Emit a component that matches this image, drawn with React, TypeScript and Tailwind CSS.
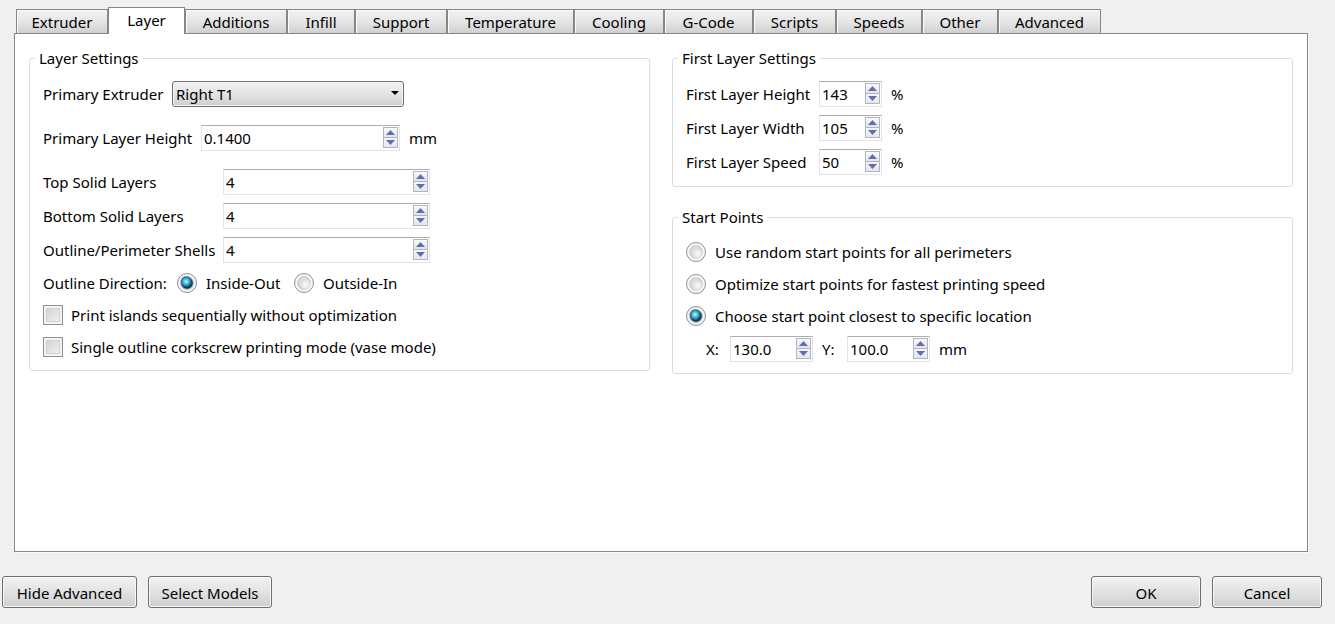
import { useId, useState } from "react";
import type { ReactNode } from "react";
import clsx from "clsx";

const tabs = [
  { name: "Extruder", width: "w-[92px]" },
  { name: "Layer", width: "w-[77px]" },
  { name: "Additions", width: "w-[102px]" },
  { name: "Infill", width: "w-[68px]" },
  { name: "Support", width: "w-[92px]" },
  { name: "Temperature", width: "w-[127px]" },
  { name: "Cooling", width: "w-[90px]" },
  { name: "G-Code", width: "w-[89px]" },
  { name: "Scripts", width: "w-[83px]" },
  { name: "Speeds", width: "w-[86px]" },
  { name: "Other", width: "w-[76px]" },
  { name: "Advanced", width: "w-[103px]" },
];

function TabBar({ active, onSelect }: { active: string; onSelect: (name: string) => void }) {
  return (
    <div role="tablist" className="relative z-10 -mb-px flex items-end pl-0.5">
      {tabs.map((tab) => (
        <button
          key={tab.name}
          type="button"
          role="tab"
          aria-selected={tab.name === active}
          onClick={() => onSelect(tab.name)}
          className={clsx(
            "shrink-0 border-x border-t border-[#85878c] text-center leading-6",
            tab.width,
            tab.name === active
              ? "h-[27px] bg-white pb-0.5"
              : "h-[25px] border-b bg-linear-to-b from-[#f2f2f2] from-0% via-[#e6e6e6] via-50% to-[#d0d0d0] shadow-[inset_1px_1px_0_#fafafa]",
          )}
        >
          {tab.name}
        </button>
      ))}
    </div>
  );
}

function Group({ title, children }: { title: string; children: ReactNode }) {
  return (
    <fieldset className="min-w-0 rounded-[3px] border border-[#d9dde0] px-[13px] pb-[11px]">
      <legend className="-ml-2 px-1 leading-6">{title}</legend>
      <div className="flex flex-col gap-2 pt-[11px]">{children}</div>
    </fieldset>
  );
}

function StepButton({ up, label, onClick }: { up?: boolean; label: string; onClick: () => void }) {
  return (
    <button
      type="button"
      aria-label={label}
      onClick={onClick}
      className={clsx(
        "flex h-[11px] w-full items-center justify-center border border-[#b3b5bb] bg-linear-to-b",
        up ? "from-[#fafafc] to-[#dfe3ef]" : "-mt-px from-[#f4f5f9] to-[#e4e7f0]",
      )}
    >
      <svg width="9" height="5" viewBox="0 0 9 5" aria-hidden="true">
        <path d={up ? "M4.5 0 9 5H0Z" : "M0 0H9L4.5 5Z"} fill="#5f6fae" />
      </svg>
    </button>
  );
}

type SpinProps = {
  label: string;
  initial: number;
  digits?: number;
  step?: number;
  unit?: string;
  labelWidth: string;
  boxWidth: string;
};

function SpinField({ label, initial, digits = 0, step = 1, unit, labelWidth, boxWidth }: SpinProps) {
  const id = useId();
  const [text, setText] = useState(initial.toFixed(digits));
  const bump = (amount: number) => setText(((Number(text) || 0) + amount).toFixed(digits));
  return (
    <div className="flex items-center gap-[9px]">
      <label htmlFor={id} className={clsx("shrink-0 whitespace-nowrap", labelWidth)}>
        {label}
      </label>
      <div
        className={clsx(
          "flex h-[26px] items-start border border-[#e2e3ea] border-t-[#abadb3] bg-white pt-px pr-px",
          boxWidth,
        )}
      >
        <input
          id={id}
          type="text"
          inputMode="decimal"
          value={text}
          onChange={(event) => setText(event.target.value)}
          className="h-[22px] min-w-0 flex-1 bg-transparent pl-0.5 outline-none"
        />
        <div className="flex w-[15px] shrink-0 flex-col">
          <StepButton up label={`Increase ${label}`} onClick={() => bump(step)} />
          <StepButton label={`Decrease ${label}`} onClick={() => bump(-step)} />
        </div>
      </div>
      {unit && <span>{unit}</span>}
    </div>
  );
}

type RadioProps = { name: string; label: string; checked: boolean; onChange: () => void };

function Radio({ name, label, checked, onChange }: RadioProps) {
  return (
    <label className="flex h-6 items-center gap-[9px] whitespace-nowrap">
      <input
        type="radio"
        name={name}
        checked={checked}
        onChange={onChange}
        className="size-5 shrink-0 appearance-none rounded-full border border-[#8e8f8f] bg-[radial-gradient(circle_closest-side_at_60%_60%,#f4f4f4_0_20%,#f4f4f400_80%),radial-gradient(circle_closest-side,#dcdcde_0_55%,#c6c7ca_70%,#f8f8f8_80%)] checked:bg-[radial-gradient(circle_closest-side_at_45%_42%,#c4f4fc_0,#52bcdc_34%,#22789f_60%,#14506f00_78%),radial-gradient(circle_closest-side,#123a54_0_58%,#b4bcc1_70%,#f4f5f6_82%)]"
      />
      {label}
    </label>
  );
}

function CheckBox({ label }: { label: string }) {
  return (
    <label className="flex h-6 items-center gap-2 whitespace-nowrap">
      <input
        type="checkbox"
        className="size-5 shrink-0 appearance-none border border-[#8e8f8f] bg-[linear-gradient(135deg,#cbcdd2,#f5f5f5)] shadow-[inset_0_0_0_2px_#f4f4f4,inset_0_0_0_3px_#d0d2d6] checked:bg-[linear-gradient(135deg,#3f6f98,#3f6f98)]"
      />
      {label}
    </label>
  );
}

function PushButton({ width, children }: { width: string; children: ReactNode }) {
  return (
    <button
      type="button"
      className={clsx(
        "h-8 rounded-[3px] border border-[#707070] bg-linear-to-b from-[#f2f2f2] from-0% via-[#e2e2e2] via-50% to-[#cfcfcf] pt-px shadow-[inset_0_0_0_1px_#f6f6f6]",
        width,
      )}
    >
      {children}
    </button>
  );
}

const startModes = [
  "Use random start points for all perimeters",
  "Optimize start points for fastest printing speed",
  "Choose start point closest to specific location",
];

export default function App() {
  const [tab, setTab] = useState("Layer");
  const [direction, setDirection] = useState("Inside-Out");
  const [startMode, setStartMode] = useState(startModes[2]);

  return (
    <div className="flex min-h-screen flex-col bg-[#f0f0f0] pt-[7px] pb-4 font-['Noto_Sans',sans-serif] text-[15px] leading-6 text-black">
      <main className="mr-[27px] ml-3.5 flex flex-1 flex-col">
        <TabBar active={tab} onSelect={setTab} />
        <div
          role="tabpanel"
          className="grid flex-1 grid-cols-2 items-start gap-x-[22px] border border-[#85878c] bg-white px-3.5 pt-3 shadow-[1px_1px_0_#fafafa]"
        >
          <Group title="Layer Settings">
            <div className="mb-2.5 flex items-center gap-[9px]">
              <label htmlFor="primary-extruder" className="w-[120px] shrink-0 whitespace-nowrap">
                Primary Extruder
              </label>
              <div className="relative w-[232px]">
                <select
                  id="primary-extruder"
                  className="block h-[26px] w-full appearance-none rounded-[3px] border border-[#707070] bg-linear-to-b from-[#f2f2f2] from-0% via-[#e4e4e4] via-50% to-[#cfcfcf] pl-[3px] leading-6 shadow-[inset_0_0_0_1px_#f4f4f4]"
                >
                  <option>Right T1</option>
                  <option>Left T0</option>
                </select>
                <svg
                  width="8"
                  height="4"
                  viewBox="0 0 8 4"
                  aria-hidden="true"
                  className="pointer-events-none absolute top-[10px] right-[5px]"
                >
                  <path d="M0 0H8L4 4Z" fill="#000" />
                </svg>
              </div>
            </div>
            <div className="mb-2.5">
              <SpinField
                label="Primary Layer Height"
                initial={0.14}
                digits={4}
                step={0.01}
                unit="mm"
                labelWidth="w-[149px]"
                boxWidth="w-[199px]"
              />
            </div>
            <SpinField label="Top Solid Layers" initial={4} labelWidth="w-[171px]" boxWidth="w-[207px]" />
            <SpinField label="Bottom Solid Layers" initial={4} labelWidth="w-[171px]" boxWidth="w-[207px]" />
            <SpinField label="Outline/Perimeter Shells" initial={4} labelWidth="w-[171px]" boxWidth="w-[207px]" />
            <div role="radiogroup" aria-label="Outline Direction" className="flex items-center">
              <span className="w-[134px] whitespace-nowrap">Outline Direction:</span>
              <div className="w-[117px]">
                <Radio
                  name="direction"
                  label="Inside-Out"
                  checked={direction === "Inside-Out"}
                  onChange={() => setDirection("Inside-Out")}
                />
              </div>
              <Radio
                name="direction"
                label="Outside-In"
                checked={direction === "Outside-In"}
                onChange={() => setDirection("Outside-In")}
              />
            </div>
            <CheckBox label="Print islands sequentially without optimization" />
            <CheckBox label="Single outline corkscrew printing mode (vase mode)" />
          </Group>

          <div className="flex flex-col gap-[18px]">
            <Group title="First Layer Settings">
              <SpinField label="First Layer Height" initial={143} unit="%" labelWidth="w-[124px]" boxWidth="w-[63px]" />
              <SpinField label="First Layer Width" initial={105} unit="%" labelWidth="w-[124px]" boxWidth="w-[63px]" />
              <SpinField label="First Layer Speed" initial={50} unit="%" labelWidth="w-[124px]" boxWidth="w-[63px]" />
            </Group>
            <Group title="Start Points">
              {startModes.map((mode) => (
                <Radio
                  key={mode}
                  name="start"
                  label={mode}
                  checked={startMode === mode}
                  onChange={() => setStartMode(mode)}
                />
              ))}
              <div className="flex gap-[9px] pl-5">
                <SpinField label="X:" initial={130} digits={1} labelWidth="w-[15px]" boxWidth="w-[83px]" />
                <SpinField label="Y:" initial={100} digits={1} unit="mm" labelWidth="w-4" boxWidth="w-[83px]" />
              </div>
            </Group>
          </div>
        </div>
      </main>
      <footer className="mt-6 flex justify-between pr-[13px] pl-0.5">
        <div className="flex gap-[11px]">
          <PushButton width="w-[135px]">Hide Advanced</PushButton>
          <PushButton width="w-[124px]">Select Models</PushButton>
        </div>
        <div className="flex gap-[11px]">
          <PushButton width="w-[110px]">OK</PushButton>
          <PushButton width="w-[110px]">Cancel</PushButton>
        </div>
      </footer>
    </div>
  );
}
